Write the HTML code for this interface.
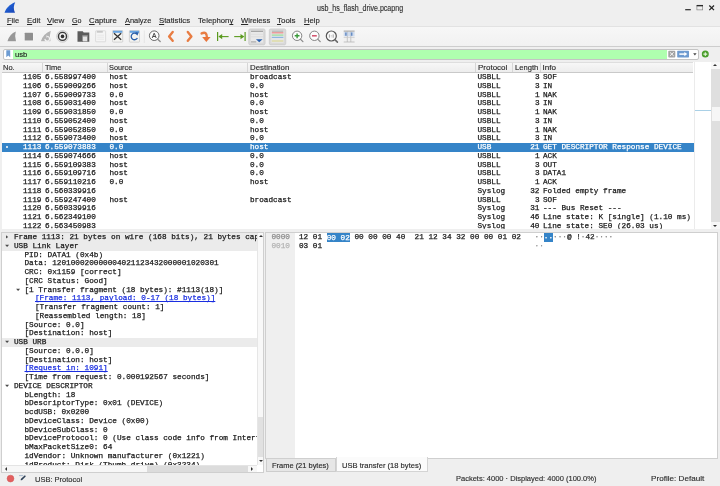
<!DOCTYPE html>
<html><head><meta charset="utf-8"><title>usb_hs_flash_drive.pcapng</title>
<style>
html,body{margin:0;padding:0;}
body{width:720px;height:486px;overflow:hidden;background:#efefef;position:relative;font-family:"Liberation Sans",sans-serif;font-size:8.4px;color:#2e2e2e;}
.abs{position:absolute;}
.mono{font-family:"Liberation Mono",monospace;font-size:7.71px;color:#1a1a1a;will-change:transform;-webkit-text-stroke:0.25px;}
.mono span{white-space:pre;}
#title{left:0;top:2px;width:720px;text-align:center;font-size:8.3px;line-height:10px;color:#333;}
#menu{left:0;top:14px;width:720px;height:13px;}
#menu span{position:absolute;top:0;line-height:13px;font-size:8.6px;color:#2a2a2a;}
#menu u{text-decoration:underline;text-underline-offset:1px;}
#toolbar{left:0;top:26px;width:720px;height:20.5px;background:linear-gradient(#f7f7f7,#f1f1f1);border-top:1px solid #e2e2e2;border-bottom:1px solid #cdcdcd;box-sizing:border-box;}
#filter{left:3px;top:48.6px;width:696px;height:11.2px;background:#fff;border:1px solid #c4c4c4;border-radius:2px;box-sizing:border-box;}
#fgreen{left:9.4px;top:0;width:653.4px;height:9.2px;background:#afffaf;}
#ftext{left:13px;top:0px;line-height:10px;font-size:8.4px;color:#222;}
#plist{left:1.8px;top:62px;width:709.2px;height:167.2px;background:#fff;overflow:hidden;}
#phead{left:-1.8px;top:0;width:693.4px;height:10.6px;background:linear-gradient(#f7f7f7,#ededed);border-bottom:1px solid #c9c9c9;border-top:1px solid #dedede;box-sizing:border-box;}
#phead span{position:absolute;top:0;line-height:9px;font-size:8.4px;color:#2a2a2a;}
#phead i{position:absolute;top:0;width:1px;height:9px;background:#d6d6d6;}
#rows{left:-1.8px;top:11.0px;width:693.6px;}
.r{position:relative;height:8.75px;line-height:8.75px;}
.r span{position:absolute;top:0;}
.r.sel{background:#3584c8;}
.r.sel span{color:#fff;}
.c0{left:0;width:41.5px;text-align:right;}
.c1{left:45px;}
.c2{left:109.5px;}
.c3{left:250px;}
.c4{left:477.5px;}
.c5{left:514px;width:25.5px;text-align:right;}
.c6{left:543px;}

#tree{left:1px;top:232px;width:263px;height:240.6px;background:#fff;border:1px solid #cfcfcf;box-sizing:border-box;overflow:hidden;}
#tin{left:0;top:-0.1px;width:254.8px;height:232px;overflow:hidden;}
.t{position:relative;height:8.75px;line-height:8.75px;}
.t.g{background:#ebebeb;}
.t span{position:absolute;top:0;}
.t .lk{color:#1a2ee0;text-decoration:underline;}
.er{position:absolute;top:2.3px;width:0;height:0;border-left:2.4px solid #4a4a4a;border-top:1.8px solid transparent;border-bottom:1.8px solid transparent;}
.ed{position:absolute;top:3.4px;width:0;height:0;border-top:2.6px solid #444;border-left:2px solid transparent;border-right:2px solid transparent;}
#tvs{left:255px;top:0;width:7px;height:232px;background:#f8f8f8;border-left:1px solid #e6e6e6;box-sizing:border-box;}
#ths{left:0;top:232.2px;width:255px;height:6.6px;background:#f7f7f7;border-top:1px solid #e4e4e4;box-sizing:border-box;}
.thumb{background:#e1e1e1;}
.au{position:absolute;width:0;height:0;border-bottom:2.6px solid #333;border-left:2.3px solid transparent;border-right:2.3px solid transparent;}
.ad{position:absolute;width:0;height:0;border-top:2.6px solid #333;border-left:2.3px solid transparent;border-right:2.3px solid transparent;}
.al{position:absolute;width:0;height:0;border-right:2.6px solid #333;border-top:2.2px solid transparent;border-bottom:2.2px solid transparent;}
.ar{position:absolute;width:0;height:0;border-left:2.6px solid #333;border-top:2.2px solid transparent;border-bottom:2.2px solid transparent;}
#hex{left:265px;top:232px;width:453px;height:226.6px;background:#fff;border:1px solid #cfcfcf;box-sizing:border-box;overflow:hidden;}
#hoff{left:0;top:0;width:28.5px;height:226px;background:#efefef;}
.h{position:absolute;left:0;height:8.72px;line-height:8.72px;}
.h span{position:absolute;top:0;}
.h .o{left:5.5px;color:#8c8c8c;}
.hl{background:#3584c8;color:#fff;padding:0.6px 0 0.9px 0;}
#tabs{left:265px;top:458px;width:455px;height:14px;}
#tab1{left:1px;top:0.6px;width:69.5px;height:13.6px;background:#e6e6e6;border:1px solid #cdcdcd;border-top:none;box-sizing:border-box;line-height:11px;text-align:center;font-size:8.3px;color:#2a2a2a;}
#tab2{left:70.5px;top:-1px;width:92px;height:15.4px;background:#fbfbfb;border:1px solid #d4d4d4;border-top:none;box-sizing:border-box;line-height:14px;text-align:center;font-size:8.3px;color:#2a2a2a;}
#status{left:0;top:472px;width:720px;height:14px;font-size:8.4px;color:#2e2e2e;}
#status span{position:absolute;top:0;line-height:14px;white-space:pre;}
#pvs{left:711.2px;top:62px;width:8.8px;height:167.4px;background:#dfdfdf;}
.ex{position:absolute;top:0;fill:#4a4a4a;}
#uitext{will-change:transform;position:absolute;left:0;top:0;width:720px;height:486px;}
.ui{position:absolute;line-height:10px;white-space:pre;transform-origin:0 0;-webkit-text-stroke:0.15px;}
.ui u{text-decoration:underline;text-underline-offset:0.6px;text-decoration-thickness:0.7px;}
</style></head><body>


<svg class="abs" style="left:0;top:0" width="720" height="14" viewBox="0 0 720 14">
<defs><linearGradient id="lg" x1="0" y1="0" x2="1" y2="1"><stop offset="0" stop-color="#3f86e6"/><stop offset="0.5" stop-color="#1d58cc"/><stop offset="1" stop-color="#1a46b4"/></linearGradient></defs>
<path d="M4.5 12.7 C6 8.5 9.5 4.2 15.2 2.2 C13.6 5.5 13.2 9 15 12.7 Z" fill="url(#lg)"/>
<path d="M685.2 9.7 H690.8" stroke="#2a2a2a" stroke-width="1.2"/>
<rect x="696.9" y="5.9" width="5.8" height="4" fill="none" stroke="#777" stroke-width="0.6"/>
<path d="M696.6 5.6 H703" stroke="#2a2a2a" stroke-width="1.3"/>
<path d="M709.3 5.5 L714 10.2 M714 5.5 L709.3 10.2" stroke="#222" stroke-width="1.2"/>
</svg>
<div id="toolbar" class="abs"></div>
<svg class="abs" style="left:0;top:27px" width="720" height="19" viewBox="0 27 720 19">
<rect x="248.7" y="28.9" width="16.4" height="16" rx="1.6" fill="#d9d9d9" stroke="#c4c4c4" stroke-width="0.6"/>
<rect x="269.3" y="28.9" width="16.5" height="16" rx="1.6" fill="#d9d9d9" stroke="#c4c4c4" stroke-width="0.6"/>
<path d="M7.4 41.2 Q9.6 34 15.8 31.5 Q14.4 36.3 16 41.2 Z" fill="#989898" stroke="#fafafa" stroke-width="0.9" paint-order="stroke"/>
<rect x="24.7" y="32.7" width="8.3" height="7.7" rx="0.5" fill="#8f8f8f" stroke="#fafafa" stroke-width="1" paint-order="stroke"/>
<path d="M40.9 41.2 Q43.4 33.6 50.8 30.8 Q49 36.3 50.6 41.2 Z" fill="#b4b4b4" stroke="#fafafa" stroke-width="0.9" paint-order="stroke"/>
<path d="M44.9 38.9 a2.3 2.3 0 1 0 2.6 -2.4" fill="none" stroke="#f4f4f4" stroke-width="1.1"/>
<path d="M46.5 35.2 l1.6 1.3 l-1.7 1.2 Z" fill="#f4f4f4"/>
<circle cx="62.5" cy="36.4" r="5.9" fill="#e2e2e2" stroke="#b2b2b2" stroke-width="0.5"/>
<circle cx="62.5" cy="36.4" r="4" fill="#f1f1f1" stroke="#3a3a3a" stroke-width="1.4"/>
<circle cx="62.5" cy="36.4" r="1.8" fill="#2f2f2f"/>
<path d="M77.5 31.3 h5.2 l1 1.3 h5.6 v9.2 h-11.8 Z" fill="#5c5c5c"/>
<rect x="82.3" y="35.3" width="5.3" height="6.5" fill="#e4e4e4" stroke="#5c5c5c" stroke-width="0.4"/>
<rect x="82.3" y="35.3" width="5.3" height="1.2" fill="#8a8a8a"/>
<rect x="95.6" y="30.8" width="10" height="11" rx="0.5" fill="#f5f5f5" stroke="#d2d2d2" stroke-width="0.7"/>
<rect x="96.8" y="30.9" width="6" height="1.8" fill="#c8c8c8"/>
<path d="M97.3 35.2h6.6M97.3 37.2h6.6M97.3 39.2h6.6" stroke="#e3e3e3" stroke-width="0.7"/>
<rect x="112.6" y="30.5" width="10.1" height="11.6" rx="0.5" fill="#f4f4f1" stroke="#c6c6c6" stroke-width="0.7"/>
<rect x="113" y="30.8" width="9.3" height="2" fill="#66a3e0"/>
<path d="M114 33.3 L121.2 39.8 M121.2 33.3 L114 39.8" stroke="#333" stroke-width="1.25" fill="none"/>
<rect x="129.4" y="30.5" width="10.1" height="11.6" rx="0.5" fill="#f4f4f1" stroke="#c6c6c6" stroke-width="0.7"/>
<rect x="129.8" y="30.8" width="9.3" height="2" fill="#66a3e0"/>
<path d="M136.9 34.2 A3.3 3.3 0 1 0 137.4 38" fill="none" stroke="#2a5ea8" stroke-width="1.3"/>
<path d="M135.3 32.1 L138.7 32.6 L137.3 35.7 Z" fill="#2a5ea8"/>
<path d="M144.3 30.5 V43" stroke="#dcdcdc" stroke-width="0.6"/>
<circle cx="154.2" cy="35.7" r="4.8" fill="#fcfcfc" stroke="#5a5a5a" stroke-width="0.9"/>
<path d="M157.7 39.3 L160.2 41.6" stroke="#8a8a8a" stroke-width="1.3" stroke-linecap="round"/>
<path d="M152.2 38 L154.2 33.2 L156.2 38 M152.9 36.5 H155.5" fill="none" stroke="#3c3c3c" stroke-width="0.9"/>
<path d="M172.7 32 L169.1 36.4 L172.7 40.8" fill="none" stroke="#e87c42" stroke-width="2.4" stroke-linejoin="round" stroke-linecap="round"/>
<path d="M187.8 32 L191.4 36.4 L187.8 40.8" fill="none" stroke="#e87c42" stroke-width="2.4" stroke-linejoin="round" stroke-linecap="round"/>
<path d="M201.6 33.4 Q207 31 206.9 37.5" fill="none" stroke="#e87c42" stroke-width="2.4" stroke-linecap="round"/>
<path d="M202.2 37 H210.6 L206.3 41.9 Z" fill="#e8743a"/>
<path d="M217.6 32.1 V41" stroke="#5a9a1e" stroke-width="1.2"/>
<path d="M219.5 36.6 H228.6" stroke="#5a9a1e" stroke-width="1.1"/>
<path d="M218.4 36.6 L222.2 34 V39.2 Z" fill="#5a9a1e"/>
<path d="M245.1 32.1 V41" stroke="#5a9a1e" stroke-width="1.2"/>
<path d="M234.2 36.6 H243.3" stroke="#5a9a1e" stroke-width="1.1"/>
<path d="M244.3 36.6 L240.5 34 V39.2 Z" fill="#5a9a1e"/>
<rect x="250.7" y="30.6" width="12.4" height="12" fill="#e9e9e9"/>
<path d="M251 31.3h12" stroke="#8c8c8c" stroke-width="0.9"/>
<path d="M251 34.3h12M251 36.8h12" stroke="#d2d2d2" stroke-width="0.5"/>
<path d="M255.9 39.3 H262.6 L259.25 42.2 Z" fill="#2860b0"/>
<path d="M251 41.9 h5.2" stroke="#8c8c8c" stroke-width="0.8"/>
<rect x="271.4" y="30.6" width="12.4" height="12" fill="#e9e9e9"/>
<path d="M271.8 31.2h11.6" stroke="#9a9a9a" stroke-width="0.8"/>
<path d="M271.8 32.8h11.6" stroke="#ea8e8e" stroke-width="1.3"/>
<path d="M271.8 35.1h11.6" stroke="#9ddc9d" stroke-width="1.3"/>
<path d="M271.8 37.4h11.6" stroke="#8fb4e2" stroke-width="1.3"/>
<path d="M271.8 39.3h11.6" stroke="#e3e3e3" stroke-width="0.9"/>
<path d="M271.8 41h11.6" stroke="#dcd89a" stroke-width="1.3"/>
<circle cx="297.1" cy="35.8" r="4.7" fill="#fcfcfc" stroke="#777" stroke-width="0.9"/>
<path d="M300.6 39.4 L302.9 41.6" stroke="#8a8a8a" stroke-width="1.3" stroke-linecap="round"/>
<path d="M294.7 35.8 H299.5 M297.1 33.4 V38.2" stroke="#3a9a3a" stroke-width="1.4"/>
<circle cx="314.4" cy="35.8" r="4.7" fill="#fcfcfc" stroke="#777" stroke-width="0.9"/>
<path d="M317.9 39.4 L320.2 41.6" stroke="#8a8a8a" stroke-width="1.3" stroke-linecap="round"/>
<path d="M312 35.8 H316.8" stroke="#d2506a" stroke-width="1.5"/>
<circle cx="331.3" cy="36" r="5" fill="#fafafa" stroke="#555" stroke-width="1.2"/>
<path d="M335.1 39.9 L337.4 42.1" stroke="#6a6a6a" stroke-width="1.6" stroke-linecap="round"/>
<path d="M329.4 34.4v3.3M333.2 34.4v3.3" stroke="#9a9a9a" stroke-width="0.9"/>
<path d="M331.3 35.2v0.6M331.3 36.6v0.6" stroke="#9a9a9a" stroke-width="0.7"/>
<rect x="343.7" y="30.9" width="10.9" height="11.2" fill="#f0f0f0"/>
<path d="M343.7 31.1h10.9" stroke="#8a8a8a" stroke-width="0.8"/>
<path d="M343.7 42h10.9" stroke="#b0b0b0" stroke-width="0.7"/>
<path d="M347.3 31v11M350.8 31v11" stroke="#b4b4b4" stroke-width="0.7"/>
<path d="M343.7 37.5h10.9" stroke="#c4c4c4" stroke-width="0.6"/>
<path d="M345.9 32.6v3.2M351.7 32.6v3.2" stroke="#2f5fa6" stroke-width="1.5"/>
<rect x="343.7" y="32" width="10.9" height="4.3" fill="#a8c4e8" fill-opacity="0.45"/>
</svg>
<div id="filter" class="abs"><div id="fgreen" class="abs"></div></div>
<svg class="abs" style="left:0;top:47px" width="720" height="15" viewBox="0 47 720 15">
<path d="M6.3 50.3 H10.2 V57.3 L8.25 55.6 L6.3 57.3 Z" fill="#6c9bd2"/>
<rect x="668.3" y="50.8" width="7" height="6.6" rx="0.9" fill="#a2a2a2"/>
<path d="M669.9 52.3 L673.7 55.9 M673.7 52.3 L669.9 55.9" stroke="#fff" stroke-width="0.9"/>
<rect x="677.2" y="50.8" width="11.8" height="6.6" rx="0.6" fill="#6f9bd0"/>
<path d="M679.3 54.1 H685" stroke="#fff" stroke-width="1.5"/>
<path d="M684.3 51.9 L687.3 54.1 L684.3 56.3 Z" fill="#fff"/>
<path d="M693.2 53.3 H696.6 L694.9 55.5 Z" fill="#444"/>
<circle cx="705.3" cy="54.1" r="3.5" fill="#4a9e2c"/>
<path d="M703.4 54.1 H707.2 M705.3 52.2 V56" stroke="#e6f5dc" stroke-width="1.1"/>
</svg>

<div id="plist" class="abs">
<div id="phead" class="abs"><i style="left:42px"></i><i style="left:107px"></i><i style="left:247px"></i><i style="left:475px"></i><i style="left:512px"></i><i style="left:540px"></i></div>
<div id="rows" class="abs mono">
<div class="r"><span class="c0">1105</span><span class="c1">6.558997400</span><span class="c2">host</span><span class="c3">broadcast</span><span class="c4">USBLL</span><span class="c5">3</span><span class="c6">SOF</span></div>
<div class="r"><span class="c0">1106</span><span class="c1">6.559009266</span><span class="c2">host</span><span class="c3">0.0</span><span class="c4">USBLL</span><span class="c5">3</span><span class="c6">IN</span></div>
<div class="r"><span class="c0">1107</span><span class="c1">6.559009733</span><span class="c2">0.0</span><span class="c3">host</span><span class="c4">USBLL</span><span class="c5">1</span><span class="c6">NAK</span></div>
<div class="r"><span class="c0">1108</span><span class="c1">6.559031400</span><span class="c2">host</span><span class="c3">0.0</span><span class="c4">USBLL</span><span class="c5">3</span><span class="c6">IN</span></div>
<div class="r"><span class="c0">1109</span><span class="c1">6.559031850</span><span class="c2">0.0</span><span class="c3">host</span><span class="c4">USBLL</span><span class="c5">1</span><span class="c6">NAK</span></div>
<div class="r"><span class="c0">1110</span><span class="c1">6.559052400</span><span class="c2">host</span><span class="c3">0.0</span><span class="c4">USBLL</span><span class="c5">3</span><span class="c6">IN</span></div>
<div class="r"><span class="c0">1111</span><span class="c1">6.559052850</span><span class="c2">0.0</span><span class="c3">host</span><span class="c4">USBLL</span><span class="c5">1</span><span class="c6">NAK</span></div>
<div class="r"><span class="c0">1112</span><span class="c1">6.559073400</span><span class="c2">host</span><span class="c3">0.0</span><span class="c4">USBLL</span><span class="c5">3</span><span class="c6">IN</span></div>
<div class="r sel"><i style="position:absolute;left:5.9px;top:3.2px;width:2.2px;height:2.2px;border-radius:50%;background:#fff"></i><span class="c0">1113</span><span class="c1">6.559073883</span><span class="c2">0.0</span><span class="c3">host</span><span class="c4">USB</span><span class="c5">21</span><span class="c6">GET DESCRIPTOR Response DEVICE</span></div>
<div class="r"><span class="c0">1114</span><span class="c1">6.559074666</span><span class="c2">host</span><span class="c3">0.0</span><span class="c4">USBLL</span><span class="c5">1</span><span class="c6">ACK</span></div>
<div class="r"><span class="c0">1115</span><span class="c1">6.559109383</span><span class="c2">host</span><span class="c3">0.0</span><span class="c4">USBLL</span><span class="c5">3</span><span class="c6">OUT</span></div>
<div class="r"><span class="c0">1116</span><span class="c1">6.559109716</span><span class="c2">host</span><span class="c3">0.0</span><span class="c4">USBLL</span><span class="c5">3</span><span class="c6">DATA1</span></div>
<div class="r"><span class="c0">1117</span><span class="c1">6.559110216</span><span class="c2">0.0</span><span class="c3">host</span><span class="c4">USBLL</span><span class="c5">1</span><span class="c6">ACK</span></div>
<div class="r"><span class="c0">1118</span><span class="c1">6.560339916</span><span class="c4">Syslog</span><span class="c5">32</span><span class="c6">Folded empty frame</span></div>
<div class="r"><span class="c0">1119</span><span class="c1">6.559247400</span><span class="c2">host</span><span class="c3">broadcast</span><span class="c4">USBLL</span><span class="c5">3</span><span class="c6">SOF</span></div>
<div class="r"><span class="c0">1120</span><span class="c1">6.560339916</span><span class="c4">Syslog</span><span class="c5">31</span><span class="c6">--- Bus Reset ---</span></div>
<div class="r"><span class="c0">1121</span><span class="c1">6.562349100</span><span class="c4">Syslog</span><span class="c5">46</span><span class="c6">Line state: K [single] (1.10 ms)</span></div>
<div class="r"><span class="c0">1122</span><span class="c1">6.563450983</span><span class="c4">Syslog</span><span class="c5">40</span><span class="c6">Line state: SE0 (26.03 us)</span></div>
</div>
</div>

<div id="pvs" class="abs"><div class="abs" style="left:0;top:0;width:9px;height:6.6px;background:#f7f7f7"></div><div class="abs" style="left:0.5px;top:44.8px;width:8.5px;height:14.4px;background:#f6f6f6"></div><div class="abs" style="left:0;top:160.4px;width:9px;height:7px;background:#f7f7f7"></div><b class="au" style="left:1.8px;top:2.4px"></b><b class="ad" style="left:1.8px;top:162.8px"></b></div>
<div class="abs" style="left:694px;top:109.5px;width:17.2px;height:1px;background:#a9d0e6"></div>
<div class="abs" style="left:694px;top:62px;width:1px;height:167px;background:#ebebeb"></div>
<div id="tree" class="abs">
<div id="tin" class="abs mono">
<div class="t g"><svg class="ex" style="left:2.0px" width="8" height="9" viewBox="0 0 8 9"><path d="M2.0 2.3 L4.2 3.9 L2.0 5.5Z"/></svg><span style="left:12.0px">Frame 1113: 21 bytes on wire (168 bits), 21 bytes captured (168 bits) on interface usb0, id 0</span></div>
<div class="t g"><svg class="ex" style="left:2.0px" width="8" height="9" viewBox="0 0 8 9"><path d="M1.1 2.7 H5.1 L3.1 5.0 Z"/></svg><span style="left:12.0px">USB Link Layer</span></div>
<div class="t"><span style="left:22.5px">PID: DATA1 (0x4b)</span></div>
<div class="t"><span style="left:22.5px">Data: 120100020000004021123432000001020301</span></div>
<div class="t"><span style="left:22.5px">CRC: 0x1159 [correct]</span></div>
<div class="t"><span style="left:22.5px">[CRC Status: Good]</span></div>
<div class="t"><svg class="ex" style="left:12.5px" width="8" height="9" viewBox="0 0 8 9"><path d="M1.1 2.7 H5.1 L3.1 5.0 Z"/></svg><span style="left:22.5px">[1 Transfer fragment (18 bytes): #1113(18)]</span></div>
<div class="t"><span class="lk" style="left:33.0px">[Frame: 1113, payload: 0-17 (18 bytes)]</span></div>
<div class="t"><span style="left:33.0px">[Transfer fragment count: 1]</span></div>
<div class="t"><span style="left:33.0px">[Reassembled length: 18]</span></div>
<div class="t"><span style="left:22.5px">[Source: 0.0]</span></div>
<div class="t"><span style="left:22.5px">[Destination: host]</span></div>
<div class="t g"><svg class="ex" style="left:2.0px" width="8" height="9" viewBox="0 0 8 9"><path d="M1.1 2.7 H5.1 L3.1 5.0 Z"/></svg><span style="left:12.0px">USB URB</span></div>
<div class="t"><span style="left:22.5px">[Source: 0.0.0]</span></div>
<div class="t"><span style="left:22.5px">[Destination: host]</span></div>
<div class="t"><span class="lk" style="left:22.5px">[Request in: 1091]</span></div>
<div class="t"><span style="left:22.5px">[Time from request: 0.000192567 seconds]</span></div>
<div class="t"><svg class="ex" style="left:2.0px" width="8" height="9" viewBox="0 0 8 9"><path d="M1.1 2.7 H5.1 L3.1 5.0 Z"/></svg><span style="left:12.0px">DEVICE DESCRIPTOR</span></div>
<div class="t"><span style="left:22.5px">bLength: 18</span></div>
<div class="t"><span style="left:22.5px">bDescriptorType: 0x01 (DEVICE)</span></div>
<div class="t"><span style="left:22.5px">bcdUSB: 0x0200</span></div>
<div class="t"><span style="left:22.5px">bDeviceClass: Device (0x00)</span></div>
<div class="t"><span style="left:22.5px">bDeviceSubClass: 0</span></div>
<div class="t"><span style="left:22.5px">bDeviceProtocol: 0 (Use class code info from Interface Descriptors)</span></div>
<div class="t"><span style="left:22.5px">bMaxPacketSize0: 64</span></div>
<div class="t"><span style="left:22.5px">idVendor: Unknown manufacturer (0x1221)</span></div>
<div class="t"><span style="left:22.5px">idProduct: Disk (Thumb drive) (0x3234)</span></div>
</div>
<div id="tvs" class="abs"><b class="au" style="left:1.0px;top:2.4px"></b><div class="abs thumb" style="left:0;top:184px;width:6px;height:40px"></div><b class="ad" style="left:1.0px;top:226.8px"></b></div>
<div id="ths" class="abs"><b class="al" style="left:2.6px;top:0.6px"></b><div class="abs" style="left:145.2px;top:0px;width:101px;height:6px;background:#dcdcdc"></div><b class="ar" style="left:249.1px;top:0.6px"></b></div>
</div>
<div id="hex" class="abs mono">
<div id="hoff" class="abs"></div>
<div class="h" style="top:0.4px"><span class="o">0000</span><span style="left:33px">12 01 <span class="hl" style="position:static">00 02</span> 00 00 00 40  21 12 34 32 00 00 01 02</span><span style="left:268.6px;color:#8a8a8a">··<span class="hl" style="position:static">··</span>···<span style="position:static;color:#2a2a2a">@ !</span>·<span style="position:static;color:#2a2a2a">42</span>····</span></div>
<div class="h" style="top:9.1px"><span class="o" style="color:#b4b4b4">0010</span><span style="left:33px">03 01</span><span style="left:268.6px;color:#999">··</span></div>
</div>
<div id="tabs" class="abs"><div id="tab1" class="abs"></div><div id="tab2" class="abs"></div></div>
<div id="status" class="abs">
<svg class="abs" style="left:0;top:0" width="40" height="14" viewBox="0 0 40 14"><circle cx="10.5" cy="6.6" r="3.4" fill="#e25f5f" stroke="#d04c4c" stroke-width="0.5"/><path d="M19 3.6 h4.2" stroke="#9fb2c8" stroke-width="0.9"/><path d="M24.9 4.2 L21.6 7.4" stroke="#2f4258" stroke-width="1.6" stroke-linecap="round"/><path d="M20.5 8.3 l0.9 -1.6 l0.9 0.9 Z" fill="#2f4258"/></svg>
</div>
<div id="uitext">
<span class="ui" style="left:317.00px;top:3.09px;font-size:8.4px;transform:scaleX(0.8444);color:#333">usb_hs_flash_drive.pcapng</span>
<span class="ui" style="left:6.80px;top:16.19px;font-size:8.1px;transform:scaleX(0.9274);color:#2a2a2a"><u>F</u>ile</span>
<span class="ui" style="left:26.50px;top:16.19px;font-size:8.1px;transform:scaleX(0.9532);color:#2a2a2a"><u>E</u>dit</span>
<span class="ui" style="left:47.00px;top:16.19px;font-size:8.1px;transform:scaleX(0.9939);color:#2a2a2a"><u>V</u>iew</span>
<span class="ui" style="left:72.30px;top:16.19px;font-size:8.1px;transform:scaleX(0.8786);color:#2a2a2a"><u>G</u>o</span>
<span class="ui" style="left:89.00px;top:16.19px;font-size:8.1px;transform:scaleX(0.9654);color:#2a2a2a"><u>C</u>apture</span>
<span class="ui" style="left:124.50px;top:16.19px;font-size:8.1px;transform:scaleX(0.9168);color:#2a2a2a"><u>A</u>nalyze</span>
<span class="ui" style="left:159.00px;top:16.19px;font-size:8.1px;transform:scaleX(0.9602);color:#2a2a2a"><u>S</u>tatistics</span>
<span class="ui" style="left:197.80px;top:16.19px;font-size:8.1px;transform:scaleX(0.9565);color:#2a2a2a">Telephon<u>y</u></span>
<span class="ui" style="left:240.60px;top:16.19px;font-size:8.1px;transform:scaleX(0.9410);color:#2a2a2a"><u>W</u>ireless</span>
<span class="ui" style="left:277.00px;top:16.19px;font-size:8.1px;transform:scaleX(0.9838);color:#2a2a2a"><u>T</u>ools</span>
<span class="ui" style="left:303.50px;top:16.19px;font-size:8.1px;transform:scaleX(0.9486);color:#2a2a2a"><u>H</u>elp</span>
<span class="ui" style="left:14.80px;top:50.09px;font-size:8.1px;transform:scaleX(0.9416);color:#1c1c1c">usb</span>
<span class="ui" style="left:3.40px;top:63.39px;font-size:8.1px;transform:scaleX(0.9279);color:#2a2a2a">No.</span>
<span class="ui" style="left:44.80px;top:63.39px;font-size:8.1px;transform:scaleX(0.9216);color:#2a2a2a">Time</span>
<span class="ui" style="left:108.80px;top:63.39px;font-size:8.1px;transform:scaleX(0.9082);color:#2a2a2a">Source</span>
<span class="ui" style="left:249.80px;top:63.39px;font-size:8.1px;transform:scaleX(0.9704);color:#2a2a2a">Destination</span>
<span class="ui" style="left:477.80px;top:63.39px;font-size:8.1px;transform:scaleX(0.9864);color:#2a2a2a">Protocol</span>
<span class="ui" style="left:514.80px;top:63.39px;font-size:8.1px;transform:scaleX(0.9408);color:#2a2a2a">Length</span>
<span class="ui" style="left:542.40px;top:63.39px;font-size:8.1px;transform:scaleX(1.0000);color:#2a2a2a">Info</span>
<span class="ui" style="left:272.30px;top:460.59px;font-size:8.1px;transform:scaleX(0.9217);color:#2a2a2a">Frame (21 bytes)</span>
<span class="ui" style="left:342.30px;top:460.59px;font-size:8.1px;transform:scaleX(0.9376);color:#2a2a2a">USB transfer (18 bytes)</span>
<span class="ui" style="left:34.80px;top:474.59px;font-size:8.1px;transform:scaleX(0.9264);color:#2e2e2e">USB: Protocol</span>
<span class="ui" style="left:456.10px;top:474.19px;font-size:8.1px;transform:scaleX(0.9260);color:#2e2e2e">Packets: 4000 · Displayed: 4000 (100.0%)</span>
<span class="ui" style="left:651.10px;top:474.19px;font-size:8.1px;transform:scaleX(1.0000);color:#2e2e2e">Profile: Default</span>
</div>
</body></html>
